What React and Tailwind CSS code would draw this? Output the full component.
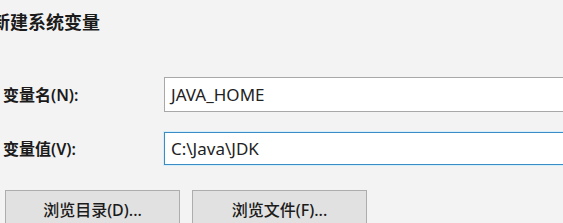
import React from 'react';

const font = { fontFamily: '"Noto Sans", "Noto Sans CJK SC", sans-serif' };

const App = () => {
    return (
        <div
            className="w-[563px] h-[223px] overflow-hidden bg-[#f3f3f3] text-[#1b1b1b] flex flex-col"
            style={font}
        >
            {/* 标题 */}
            <div className="mt-[12px] ml-[-8px] text-[18px] leading-[20px] font-semibold">新建系统变量</div>

            {/* 变量名 */}
            <div className="mt-[45px] flex items-center">
                <div className="w-[164px] shrink-0 pl-[3px] text-[16px] font-semibold">变量名(N):</div>
                <div className="h-[35px] w-[420px] shrink-0 border border-[#a8a8a8] bg-white pl-[6px] flex items-center text-[17px] text-[#222]">
                    JAVA_HOME
                </div>
            </div>

            {/* 变量值 */}
            <div className="mt-[20px] flex items-center">
                <div className="w-[164px] shrink-0 pl-[3px] text-[16px] font-semibold">变量值(V):</div>
                <div className="h-[33px] w-[420px] shrink-0 border border-[#3a8cc4] bg-white pl-[6px] flex items-center text-[17px] text-[#222] shadow-[0_0_0_1px_#d5eef9]">
                    C:\Java\JDK
                </div>
            </div>

            {/* 按钮 */}
            <div className="mt-[25px] flex gap-[12px] pl-[5px]">
                <button className="w-[175px] h-[40px] shrink-0 border border-[#adadad] bg-[#e1e1e1] text-[16px] font-medium text-[#1b1b1b]">
                    浏览目录(D)...
                </button>
                <button className="w-[175px] h-[40px] shrink-0 border border-[#adadad] bg-[#e1e1e1] text-[16px] font-medium text-[#1b1b1b]">
                    浏览文件(F)...
                </button>
            </div>
        </div>
    );
};

export default App;
